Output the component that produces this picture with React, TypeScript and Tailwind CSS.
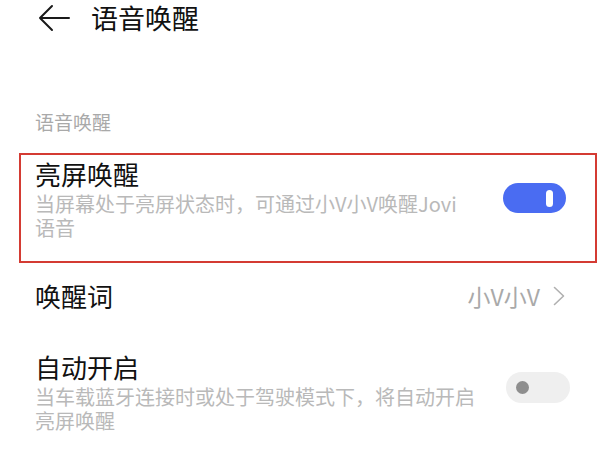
import React from "react";

const font = { fontFamily: '"Noto Sans CJK SC", "Noto Sans", sans-serif' };

function OnToggle() {
  return (
    <div className="w-[63px] h-[30px] rounded-full bg-[#4a6cf2] flex items-center justify-end pr-[13px] shrink-0">
      <div className="w-[7px] h-[17px] rounded-full bg-white" />
    </div>
  );
}

function OffToggle() {
  return (
    <div className="w-[64px] h-[31px] rounded-full bg-[#efefef] flex items-center pl-[10px] shrink-0">
      <div className="w-[13px] h-[13px] rounded-full bg-[#8e8e8e]" />
    </div>
  );
}

export default function App() {
  return (
    <div className="w-[613px] h-[457px] bg-white overflow-hidden" style={font}>
      {/* header */}
      <div className="h-[34px] pt-[2px] flex items-center pl-[38px]">
        <svg width="32" height="28" viewBox="0 0 32 28" className="shrink-0">
          <path d="M14 2 L2 14 L14 26 M2 14 H31" fill="none" stroke="#1a1a1a" strokeWidth="2" strokeLinecap="round" strokeLinejoin="round" />
        </svg>
        <div className="ml-[21px] text-[27px] leading-[30px] text-[#111]">语音唤醒</div>
      </div>

      {/* section label */}
      <div className="mt-[76px] pl-[35px] h-[24px] text-[19px] leading-[24px] text-[#a9a9a9]">语音唤醒</div>

      {/* highlighted item */}
      <div className="mt-[19px] ml-[19px] mr-[16px] h-[110px] border-2 border-[#d43b33] flex items-start">
        <div className="flex-1 pl-[14px] pt-[4px]">
          <div className="text-[26px] leading-[30px] text-[#111]">亮屏唤醒</div>
          <div className="mt-[3px] w-[432px] text-[20px] leading-[24px] text-[#b9b9b9]">
            当屏幕处于亮屏状态时，可通过小V小V唤醒Jovi语音
          </div>
        </div>
        <div className="mt-[28px] mr-[29px]">
          <OnToggle />
        </div>
      </div>

      {/* wake word */}
      <div className="mt-[18px] pl-[35px] pr-[48px] h-[30px] flex items-center justify-between">
        <div className="text-[26px] leading-[30px] text-[#111]">唤醒词</div>
        <div className="flex items-center">
          <span className="text-[23px] leading-[30px] text-[#a9a9a9]">小V小V</span>
          <svg width="12" height="20" viewBox="0 0 12 20" className="ml-[13px]">
            <path d="M1.5 1.5 L10.5 10 L1.5 18.5" fill="none" stroke="#b0b0b0" strokeWidth="1.6" strokeLinecap="round" strokeLinejoin="round" />
          </svg>
        </div>
      </div>

      {/* auto enable */}
      <div className="mt-[41px] flex items-start">
        <div className="flex-1 pl-[35px]">
          <div className="text-[26px] leading-[30px] text-[#111]">自动开启</div>
          <div className="mt-[3px] w-[445px] text-[20px] leading-[24px] text-[#b9b9b9]">
            当车载蓝牙连接时或处于驾驶模式下，将自动开启亮屏唤醒
          </div>
        </div>
        <div className="mt-[20px] mr-[43px]">
          <OffToggle />
        </div>
      </div>
    </div>
  );
}
